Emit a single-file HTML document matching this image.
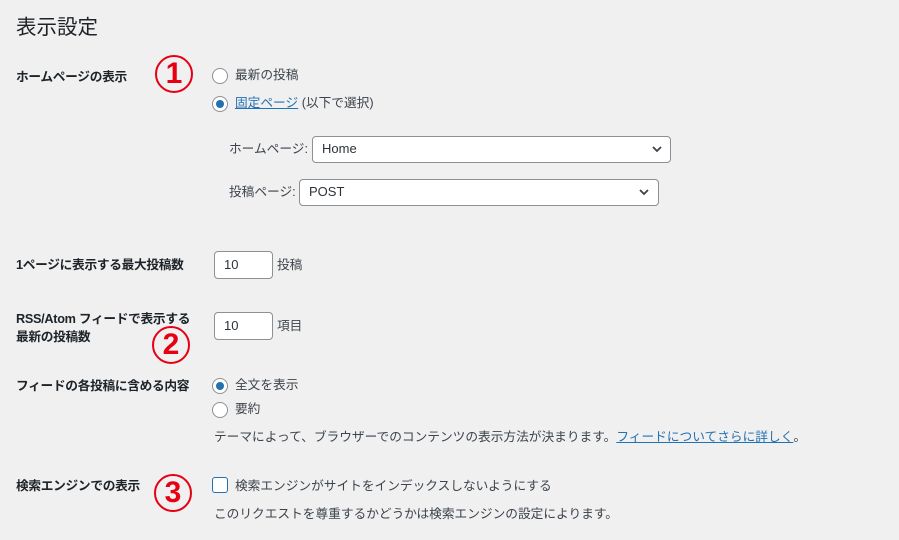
<!DOCTYPE html>
<html><head><meta charset="utf-8"><style>
body{margin:0;width:899px;height:540px;background:#f0f0f1;font-family:"Liberation Sans","Noto Sans CJK JP",sans-serif;color:#3c434a;font-size:12.7px;position:relative;overflow:hidden}
.a{position:absolute;white-space:nowrap;line-height:18px}
.b{font-weight:bold;color:#1d2327;letter-spacing:-0.3px}
.radio{position:absolute;width:14px;height:14px;border:1px solid #8c8f94;border-radius:50%;background:#fff}
.radio.on::after{content:"";position:absolute;left:3px;top:3px;width:8px;height:8px;border-radius:50%;background:#2271b1}
.box{position:absolute;background:#fff;border:1px solid #8c8f94;border-radius:4px;box-sizing:border-box;padding-left:9px;line-height:24px;font-size:13px;color:#2c3338}
.num{position:absolute;width:34px;height:34px;border:2px solid #e60012;border-radius:50%;color:#e60012;font-weight:bold;font-size:30px;line-height:34px;text-align:center;font-family:"Liberation Sans",sans-serif}
a{color:#2271b1;text-decoration:underline}
</style></head><body>
<div class="a" style="left:16px;top:15px;font-size:20.5px;line-height:26px;color:#1d2327">表示設定</div>

<div class="a b" style="left:16px;top:68px">ホームページの表示</div>
<div class="num" style="left:155px;top:55px">1</div>
<div class="radio" style="left:212px;top:68px"></div>
<div class="a" style="left:235px;top:66px">最新の投稿</div>
<div class="radio on" style="left:212px;top:96px"></div>
<div class="a" style="left:235px;top:94px"><a>固定ページ</a> (以下で選択)</div>

<div class="a" style="left:229px;top:140px">ホームページ:</div>
<div class="box" style="left:312px;top:136px;width:359px;height:27px">Home</div>
<svg class="a" style="left:651px;top:144px" width="12" height="10"><path d="M2 3l4 4 4-4" fill="none" stroke="#3c434a" stroke-width="1.8"/></svg>
<div class="a" style="left:229px;top:183px">投稿ページ:</div>
<div class="box" style="left:299px;top:179px;width:360px;height:27px">POST</div>
<svg class="a" style="left:638px;top:187px" width="12" height="10"><path d="M2 3l4 4 4-4" fill="none" stroke="#3c434a" stroke-width="1.8"/></svg>

<div class="a b" style="left:16px;top:256px">1ページに表示する最大投稿数</div>
<div class="box" style="left:214px;top:251px;width:59px;height:28px;line-height:26px">10</div>
<div class="a" style="left:277px;top:256px">投稿</div>

<div class="a b" style="left:16px;top:310px">RSS/Atom フィードで表示する<br>最新の投稿数</div>
<div class="box" style="left:214px;top:312px;width:59px;height:28px;line-height:26px">10</div>
<div class="a" style="left:277px;top:317px">項目</div>
<div class="num" style="left:152px;top:326px">2</div>

<div class="a b" style="left:16px;top:377px">フィードの各投稿に含める内容</div>
<div class="radio on" style="left:212px;top:378px"></div>
<div class="a" style="left:235px;top:376px">全文を表示</div>
<div class="radio" style="left:212px;top:402px"></div>
<div class="a" style="left:235px;top:400px">要約</div>
<div class="a" style="left:214px;top:428px">テーマによって、ブラウザーでのコンテンツの表示方法が決まります。<a>フィードについてさらに詳しく</a>。</div>

<div class="a b" style="left:16px;top:477px">検索エンジンでの表示</div>
<div class="num" style="left:154px;top:474px">3</div>
<div style="position:absolute;left:212px;top:477px;width:14px;height:14px;border:1.5px solid #2271b1;border-radius:3px;background:#fff"></div>
<div class="a" style="left:235px;top:477px">検索エンジンがサイトをインデックスしないようにする</div>
<div class="a" style="left:214px;top:505px">このリクエストを尊重するかどうかは検索エンジンの設定によります。</div>
</body></html>
